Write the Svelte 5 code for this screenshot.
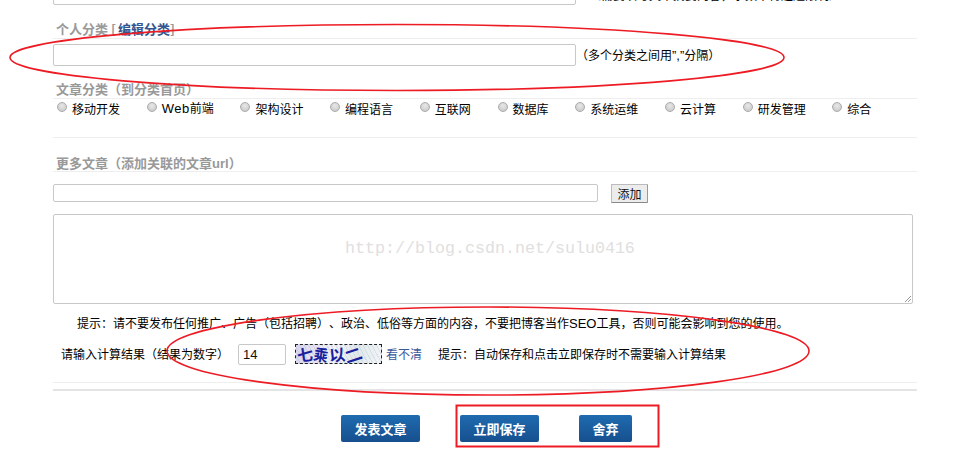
<script>
  const cats = ['移动开发', '前端', '架构设计', '编程语言', '互联网', '数据库', '系统运维', '云计算', '研发管理', '综合'];
</script>

<div class="page">
  <div class="form">
    <div class="top-row">
      <input class="field top-field" type="text" />
      <span class="top-note">（需要填写文章摘要内容，字数不得超过限制）</span>
    </div>

    <h3 class="title t1">个人分类 [<a href="#a">编辑分类</a>]</h3>
    <div class="row cat-row">
      <input class="field cat-field" type="text" />
      <span class="note">（多个分类之间用<span class="latin">”,”</span>分隔）</span>
    </div>

    <h3 class="title t2">文章分类（到分类首页）</h3>
    <div class="radios">
      {#each cats as c}
        <label class="radio"><span class="dot"></span><span>{#if c === '前端'}<span class="latin web">Web</span>{/if}{c}</span></label>
      {/each}
    </div>
    <div class="rule"></div>

    <h3 class="title t3">更多文章（添加关联的文章<span class="latin-b">url</span>）</h3>
    <div class="row url-row">
      <input class="field url-field" type="text" />
      <button class="add">添加</button>
    </div>
    <div class="area">
      <span class="resize"></span>
    </div>

    <p class="tip">提示：请不要发布任何推广、广告（包括招聘）、政治、低俗等方面的内容，不要把博客当作<span class="latin">SEO</span>工具，否则可能会影响到您的使用。</p>

    <div class="row calc">
      <span class="calc-label">请输入计算结果（结果为数字）</span>
      <input class="field calc-field" type="text" value="14" />
      <div class="captcha"><span class="c1">七</span><span class="c2">乘</span><span class="c3">以</span><span class="c4">二</span></div>
      <a class="blur" href="#b">看不清</a>
      <span class="calc-tip">提示：自动保存和点击立即保存时不需要输入计算结果</span>
    </div>
    <div class="rule thin"></div>
    <div class="rule thick"></div>

    <div class="actions">
      <button class="btn">发表文章</button>
      <button class="btn">立即保存</button>
      <button class="btn small">舍弃</button>
    </div>
  </div>

  <span class="watermark">http://blog.csdn.net/sulu0416</span>
  <svg class="marks" width="960" height="475" viewBox="0 0 960 475" fill="none" stroke="#ed1c24">
    <ellipse cx="397" cy="57.5" rx="387" ry="33" stroke-width="1.6" />
    <ellipse cx="488" cy="351" rx="321" ry="44" stroke-width="1.6" />
    <rect x="456.5" y="405.5" width="202" height="41" stroke-width="2" />
  </svg>
</div>

<style>
  :global(body) { margin: 0; background: #fff; }
  .page {
    position: relative;
    width: 960px;
    height: 475px;
    overflow: hidden;
    font: 12px/16px "Noto Sans CJK SC", "Liberation Sans", sans-serif;
    color: #000;
    text-spacing-trim: space-all;
    font-feature-settings: "chws" 0;
  }
  .latin { font: 13px/16px "Liberation Sans", sans-serif; }
  .web { letter-spacing: .5px; }
  .latin-b { font: 700 13px/16px "Liberation Sans", sans-serif; }
  .form { width: 864px; margin-left: 53px; }
  .row { display: flex; align-items: center; }
  .field {
    box-sizing: border-box;
    margin: 0;
    padding: 0 4px;
    border: 1px solid #c8c8c8;
    border-radius: 2px;
    background: #fff;
    font: inherit;
  }
  .top-row { display: flex; align-items: flex-end; height: 5px; }
  .top-field { width: 523px; height: 22px; flex: none; }
  .top-note { margin: 0 0 2px 13px; white-space: nowrap; font-size: 12px; }
  .title {
    box-sizing: border-box;
    margin: 0;
    padding-left: 3px;
    border-bottom: 1px solid #eee;
    font-size: 13px;
    font-weight: 700;
    line-height: 16px;
    color: #999;
  }
  .title a { margin-left: 2px; color: #34558f; text-decoration: none; }
  .t1 { margin-top: 16px; height: 18px; }
  .cat-row { margin-top: 5px; }
  .cat-field { width: 523px; height: 22px; }
  .note { margin-left: 0; font-size: 12px; white-space: nowrap; }
  .t2 { margin-top: 14px; height: 19px; padding-top: 1px; }
  .radios { display: flex; margin-top: 1px; padding-left: 4px; height: 17px; }
  .radio { display: flex; align-items: center; gap: 5px; margin-right: 26.7px; white-space: nowrap; }
  .dot {
    box-sizing: border-box;
    width: 10px;
    height: 10px;
    margin-top: -4px;
    border: 1px solid #aaa;
    border-radius: 50%;
    background: radial-gradient(circle at 50% 35%, #e8e8e8, #c4c4c4);
  }
  .rule { height: 1px; background: #eee; }
  .radios + .rule { margin-top: 20px; }
  .t3 { margin-top: 17px; height: 17px; }
  .url-row { margin-top: 12px; align-items: flex-start; }
  .url-field { width: 545px; height: 18px; }
  .add {
    box-sizing: border-box;
    width: 37px;
    height: 19px;
    margin: 0 0 0 13px;
    padding: 0;
    border: 1px solid #bbb;
    border-right-color: #999;
    border-bottom-color: #888;
    border-radius: 1px;
    background: #ececec;
    font: inherit;
    color: #111;
  }
  .area {
    position: relative;
    box-sizing: border-box;
    width: 860px;
    height: 90px;
    margin-top: 11px;
    border: 1px solid #c8c8c8;
    border-radius: 2px;
  }
  .resize {
    position: absolute;
    right: 1px;
    bottom: 1px;
    width: 6px;
    height: 6px;
    background: linear-gradient(135deg, transparent 45%, #999 45%, #999 55%, transparent 55%, transparent 70%, #999 70%, #999 80%, transparent 80%);
  }
  .tip { margin: 11px 0 0 24px; white-space: nowrap; line-height: 16px; }
  .calc { margin-top: 11px; height: 22px; }
  .calc-label { width: 177px; margin-left: 8px; flex: none; white-space: nowrap; }
  .calc-field { width: 48px; height: 21px; flex: none; color: #111; font: 13px "Liberation Sans", sans-serif; }
  .captcha {
    display: flex;
    box-sizing: border-box;
    width: 87px;
    height: 20px;
    margin: -1px 0 0 9px;
    padding-left: 1px;
    flex: none;
    border: 1px dashed #222;
    background:
      repeating-linear-gradient(62deg, transparent 0 3px, rgba(150, 170, 190, .22) 3px 4px),
      linear-gradient(100deg, #d8d4ec, #f3f3fa 45%, #dfe8ea 70%, #f2f4f8);
    color: #1b1f9c;
    font-size: 16px;
    font-weight: 700;
    line-height: 18px;
  }
  .captcha span { display: block; height: 18px; }
  .c1 { transform: rotate(-8deg); }
  .c2 { transform: rotate(10deg) scaleX(.9); }
  .c3 { transform: rotate(-6deg); }
  .c4 { transform: rotate(-18deg) scaleX(1.1); }
  .blur { margin-left: 4px; color: #3b5a9a; text-decoration: none; white-space: nowrap; }
  .calc-tip { margin-left: 16px; white-space: nowrap; }
  .rule.thin { margin-top: 17px; }
  .rule.thick { height: 2px; margin-top: 6px; background: #e4e4e4; }
  .actions { display: flex; gap: 40px; margin: 24px 0 0 288px; }
  .btn {
    box-sizing: border-box;
    width: 79px;
    height: 27px;
    padding: 0;
    border: 0;
    border-radius: 2px;
    background: linear-gradient(#1f6bb0, #164f8e);
    color: #fff;
    font: 700 13px/27px "Noto Sans CJK SC", sans-serif;
  }
  .btn.small { width: 53px; }
  .watermark {
    position: absolute;
    left: 345px;
    top: 239px;
    font: 16.67px/20px "Liberation Mono", monospace;
    color: #e0e0e0;
    white-space: nowrap;
  }
  .marks { position: absolute; left: 0; top: 0; pointer-events: none; }
</style>
